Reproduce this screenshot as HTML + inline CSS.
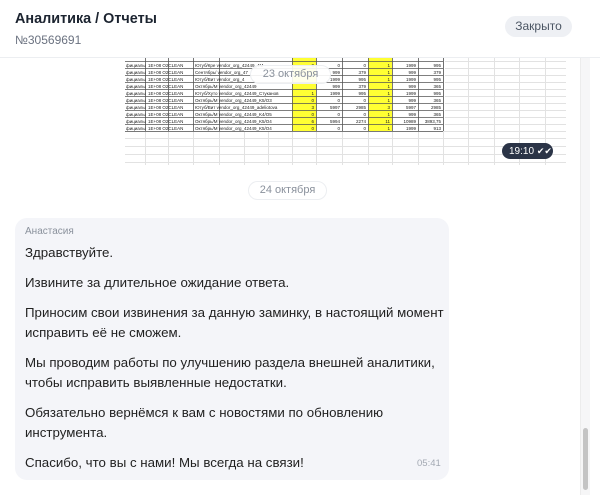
<!DOCTYPE html>
<html><head><meta charset="utf-8"><style>
*{margin:0;padding:0;box-sizing:border-box}
body{width:600px;height:495px;background:#fff;font-family:"Liberation Sans","Noto Sans CJK SC",sans-serif;position:relative;overflow:hidden;color:#1f2329}
.h1{position:absolute;left:15px;top:11px;font-size:14.4px;font-weight:bold;color:#1c2430}
.num{position:absolute;left:15px;top:33px;font-size:12px;color:#6b7280}
.closed{position:absolute;left:505px;top:16px;width:67px;height:21px;border-radius:11px;background:#eef0f4;font-size:12px;color:#4b5563;text-align:center;line-height:21px}
.hb{position:absolute;left:0;top:57px;width:600px;height:1px;background:#eceef1}
.track{position:absolute;left:580px;top:58px;width:10px;height:437px;background:#f6f6f7;border-left:1px solid #ececec}
.thumb{position:absolute;left:583px;top:428px;width:5px;height:62px;border-radius:3px;background:#c4c4c4}
.pill{position:absolute;height:19px;border-radius:10px;background:#fff;border:1px solid #eceef1;font-size:11px;color:#8a919c;text-align:center;line-height:17px}
.time{position:absolute;left:502px;top:143px;width:51px;height:16px;border-radius:8px;background:#2b3447;color:#fff;font-size:10px;line-height:16px;padding-left:7px}
.bub{position:absolute;left:15px;top:218px;width:434px;height:262px;border-radius:12px;background:#f4f5f9}
.name{position:absolute;left:25px;top:226px;font-size:10px;color:#8a919c}
.txt{position:absolute;left:25px;top:243px;width:424px;font-size:13.3px;line-height:20px;color:#222}
.txt p{margin-bottom:10px}
.t2{position:absolute;left:417px;top:458px;font-size:9.5px;color:#a3a9b3}
</style></head><body>
<div class="h1">Аналитика / Отчеты</div>
<div class="num">№30569691</div>
<div class="closed">Закрыто</div>
<div class="hb"></div>
<svg style="position:absolute;left:0;top:58px" width="580" height="110">
<g>
<rect x="292" y="0" width="24" height="73" fill="#ffff33"/>
<rect x="368" y="0" width="24" height="73" fill="#ffff33"/>
<g stroke="#e2e2e2" stroke-width="1">
<line x1="125" y1="80.5" x2="566" y2="80.5"/><line x1="125" y1="88.5" x2="566" y2="88.5"/><line x1="125" y1="96.5" x2="566" y2="96.5"/><line x1="125" y1="104.5" x2="566" y2="104.5"/>
<line x1="443.5" y1="0" x2="443.5" y2="107"/><line x1="468.5" y1="0" x2="468.5" y2="107"/><line x1="494.5" y1="0" x2="494.5" y2="107"/><line x1="519.5" y1="0" x2="519.5" y2="107"/><line x1="545.5" y1="0" x2="545.5" y2="107"/>
<line x1="145.5" y1="73" x2="145.5" y2="107"/><line x1="168.5" y1="73" x2="168.5" y2="107"/><line x1="193.5" y1="73" x2="193.5" y2="107"/><line x1="219.5" y1="73" x2="219.5" y2="107"/><line x1="244.5" y1="73" x2="244.5" y2="107"/><line x1="268.5" y1="73" x2="268.5" y2="107"/><line x1="292.5" y1="73" x2="292.5" y2="107"/><line x1="316.5" y1="73" x2="316.5" y2="107"/><line x1="342.5" y1="73" x2="342.5" y2="107"/><line x1="368.5" y1="73" x2="368.5" y2="107"/><line x1="392.5" y1="73" x2="392.5" y2="107"/><line x1="418.5" y1="73" x2="418.5" y2="107"/>
<line x1="445" y1="3.5" x2="566" y2="3.5"/><line x1="445" y1="10.5" x2="566" y2="10.5"/><line x1="445" y1="17.5" x2="566" y2="17.5"/><line x1="445" y1="24.5" x2="566" y2="24.5"/><line x1="445" y1="31.5" x2="566" y2="31.5"/><line x1="445" y1="38.5" x2="566" y2="38.5"/><line x1="445" y1="45.5" x2="566" y2="45.5"/><line x1="445" y1="52.5" x2="566" y2="52.5"/><line x1="445" y1="59.5" x2="566" y2="59.5"/><line x1="445" y1="66.5" x2="566" y2="66.5"/><line x1="125" y1="73.5" x2="566" y2="73.5"/>
</g>
<g stroke="#555" stroke-width="0.8">
<line x1="125" y1="3.5" x2="443" y2="3.5"/><line x1="125" y1="10.5" x2="443" y2="10.5"/><line x1="125" y1="17.5" x2="443" y2="17.5"/><line x1="125" y1="24.5" x2="443" y2="24.5"/><line x1="125" y1="31.5" x2="443" y2="31.5"/><line x1="125" y1="38.5" x2="443" y2="38.5"/><line x1="125" y1="45.5" x2="443" y2="45.5"/><line x1="125" y1="52.5" x2="443" y2="52.5"/><line x1="125" y1="59.5" x2="443" y2="59.5"/><line x1="125" y1="66.5" x2="443" y2="66.5"/><line x1="125" y1="73.5" x2="443" y2="73.5"/>
<line x1="145.5" y1="0" x2="145.5" y2="73"/><line x1="168.5" y1="0" x2="168.5" y2="73"/><line x1="193.5" y1="0" x2="193.5" y2="73"/><line x1="219.5" y1="0" x2="219.5" y2="73"/><line x1="292.5" y1="0" x2="292.5" y2="73"/><line x1="316.5" y1="0" x2="316.5" y2="73"/><line x1="342.5" y1="0" x2="342.5" y2="73"/><line x1="368.5" y1="0" x2="368.5" y2="73"/><line x1="392.5" y1="0" x2="392.5" y2="73"/><line x1="418.5" y1="0" x2="418.5" y2="73"/><line x1="443.5" y1="0" x2="443.5" y2="73"/>
</g>
<g font-size="4.5" fill="#222" font-family="Liberation Sans">
<text x="126" y="9">фициалы</text><text x="126" y="16">фициалы</text><text x="126" y="23">фициалы</text><text x="126" y="30">фициалы</text><text x="126" y="37">фициалы</text><text x="126" y="44">фициалы</text><text x="126" y="51">фициалы</text><text x="126" y="58">фициалы</text><text x="126" y="65">фициалы</text><text x="126" y="72">фициалы</text>
<text x="148" y="9">1E+08 O2CLEAN</text><text x="148" y="16">1E+08 O2CLEAN</text><text x="148" y="23">1E+08 O2CLEAN</text><text x="148" y="30">1E+08 O2CLEAN</text><text x="148" y="37">1E+08 O2CLEAN</text><text x="148" y="44">1E+08 O2CLEAN</text><text x="148" y="51">1E+08 O2CLEAN</text><text x="148" y="58">1E+08 O2CLEAN</text><text x="148" y="65">1E+08 O2CLEAN</text><text x="148" y="72">1E+08 O2CLEAN</text>
<text x="195" y="9">Ютуб/Кре vendor_org_42449_4M</text><text x="195" y="16">Сентябрь/ vendor_org_47</text><text x="195" y="23">Ютуб/Вит vendor_org_4</text><text x="195" y="30">Октябрь/М vendor_org_42449</text><text x="195" y="37">Ютуб/Хуто vendor_org_42449_Стуканов</text><text x="195" y="44">Октябрь/М vendor_org_42449_K5/O3</text><text x="195" y="51">Ютуб/Вит vendor_org_42449_adeliotova</text><text x="195" y="58">Октябрь/М vendor_org_42449_K4/O5</text><text x="195" y="65">Октябрь/М vendor_org_42449_K5/O4</text><text x="195" y="72">Октябрь/М vendor_org_42449_K5/O4</text>
</g>
<g font-size="4.5" fill="#222" font-family="Liberation Sans" text-anchor="end">
<text x="314" y="9">0</text><text x="340" y="9">0</text><text x="366" y="9">0</text><text x="390" y="9">1</text><text x="416" y="9">1999</text><text x="441" y="9">995</text>
<text x="340" y="16">999</text><text x="366" y="16">379</text><text x="390" y="16">1</text><text x="416" y="16">999</text><text x="441" y="16">379</text>
<text x="340" y="23">1999</text><text x="366" y="23">995</text><text x="390" y="23">1</text><text x="416" y="23">1999</text><text x="441" y="23">995</text>
<text x="340" y="30">999</text><text x="366" y="30">379</text><text x="390" y="30">1</text><text x="416" y="30">999</text><text x="441" y="30">365</text>
<text x="314" y="37">1</text><text x="340" y="37">1999</text><text x="366" y="37">995</text><text x="390" y="37">1</text><text x="416" y="37">1999</text><text x="441" y="37">995</text>
<text x="314" y="44">0</text><text x="340" y="44">0</text><text x="366" y="44">0</text><text x="390" y="44">1</text><text x="416" y="44">999</text><text x="441" y="44">365</text>
<text x="314" y="51">3</text><text x="340" y="51">5997</text><text x="366" y="51">2985</text><text x="390" y="51">3</text><text x="416" y="51">5997</text><text x="441" y="51">2985</text>
<text x="314" y="58">0</text><text x="340" y="58">0</text><text x="366" y="58">0</text><text x="390" y="58">1</text><text x="416" y="58">999</text><text x="441" y="58">365</text>
<text x="314" y="65">6</text><text x="340" y="65">5994</text><text x="366" y="65">2274</text><text x="390" y="65">11</text><text x="416" y="65">10989</text><text x="441" y="65">3893,75</text>
<text x="314" y="72">0</text><text x="340" y="72">0</text><text x="366" y="72">0</text><text x="390" y="72">1</text><text x="416" y="72">1999</text><text x="441" y="72">913</text>
</g>
</g>
</svg>
<div class="pill" style="left:250px;top:65px;width:81px;background:rgba(255,255,255,.9)">23 октября</div>
<div class="time">19:10 <span style="font-size:9px">✔✔</span></div>
<div class="pill" style="left:248px;top:181px;width:79px">24 октября</div>
<div class="track"></div><div class="thumb"></div>
<div class="bub"></div>
<div class="name">Анастасия</div>
<div class="txt">
<p>Здравствуйте.</p>
<p>Извините за длительное ожидание ответа.</p>
<p>Приносим свои извинения за данную заминку, в настоящий момент исправить её не сможем.</p>
<p>Мы проводим работы по улучшению раздела внешней аналитики, чтобы исправить выявленные недостатки.</p>
<p>Обязательно вернёмся к вам с новостями по обновлению инструмента.</p>
<p>Спасибо, что вы с нами! Мы всегда на связи!</p>
</div>
<div class="t2">05:41</div>
</body></html>
